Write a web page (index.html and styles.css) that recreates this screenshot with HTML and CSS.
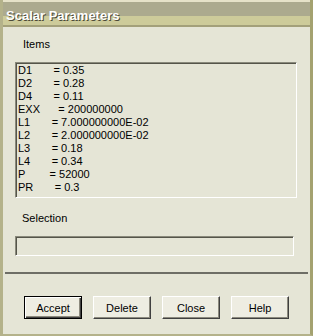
FILE: index.html
```html
<!doctype html>
<html lang="en">
<head>
<title>Scalar Parameters</title>
<meta name="viewport" content="width=device-width, initial-scale=1">
<link rel="stylesheet" href="styles.css">
</head>
<body>
<div class="window">
<div class="titlebar">Scalar Parameters</div>
<div class="content">
<div class="label">Items</div>
<div class="listbox">
<div>D1       = 0.35</div>
<div>D2       = 0.28</div>
<div>D4       = 0.11</div>
<div>EXX      = 200000000</div>
<div>L1       = 7.000000000E-02</div>
<div>L2       = 2.000000000E-02</div>
<div>L3       = 0.18</div>
<div>L4       = 0.34</div>
<div>P        = 52000</div>
<div>PR       = 0.3</div>
</div>
<div class="label sel">Selection</div>
<div class="field"></div>
</div>
<div class="separator"></div>
<div class="buttons">
<button class="btn default">Accept</button>
<button class="btn">Delete</button>
<button class="btn">Close</button>
<button class="btn">Help</button>
</div>
</div>
</body>
</html>
```
FILE: styles.css
```css
* { box-sizing:border-box; margin:0; font-family:'Liberation Sans', Arial, sans-serif; font-size:11px; }
body { background:#e5e5d6; }
.window { width:313px; height:336px; background:#e5e5d6; border-left:3px solid #b4b28a; border-right:3px solid #a4a270; border-bottom:2px solid #b4b28a; display:flex; flex-direction:column; }
.titlebar { height:27px; padding:8px 0 0 3px; color:#fff; font-weight:bold; font-size:13px; text-shadow:1px 1px #4c4a38; background:linear-gradient(to bottom, #e6e2c8 0 2px, #acaa8e 2px 16px, #cdcb9a 16px 25px, #a3a07a 25px 27px); }
.content { padding:0 13px 0 12px; }
.label { padding:11px 0 0 8px; height:35px; color:#000; }
.label.sel { padding:14px 0 0 7px; height:38px; }
.listbox { height:136px; padding:1px 0 0 2px; border:1px solid; border-color:#8a8a7c #fff #fff #8a8a7c; box-shadow:inset 1px 1px #55554a; }
.listbox div { white-space:pre; line-height:13px; color:#000; }
.field { width:279px; height:20px; border:1px solid; border-color:#8a8a7c #fff #fff #8a8a7c; box-shadow:inset 1px 1px #55554a; }
.separator { height:2px; margin:16px 2px 0 2px; background:#6e6e66; }
.buttons { display:flex; column-gap:11px; padding:22px 0 0 21px; }
.btn { width:58px; height:23px; padding:0; background:#eeede2; color:#000; border:1px solid; border-color:#fff #404040 #404040 #fff; box-shadow:inset -1px -1px #8c8a7e; }
.btn.default { border-color:#000; box-shadow:inset 1px 1px #fff, inset -1px -1px #404040, inset -2px -2px #8c8a7e; }
```
